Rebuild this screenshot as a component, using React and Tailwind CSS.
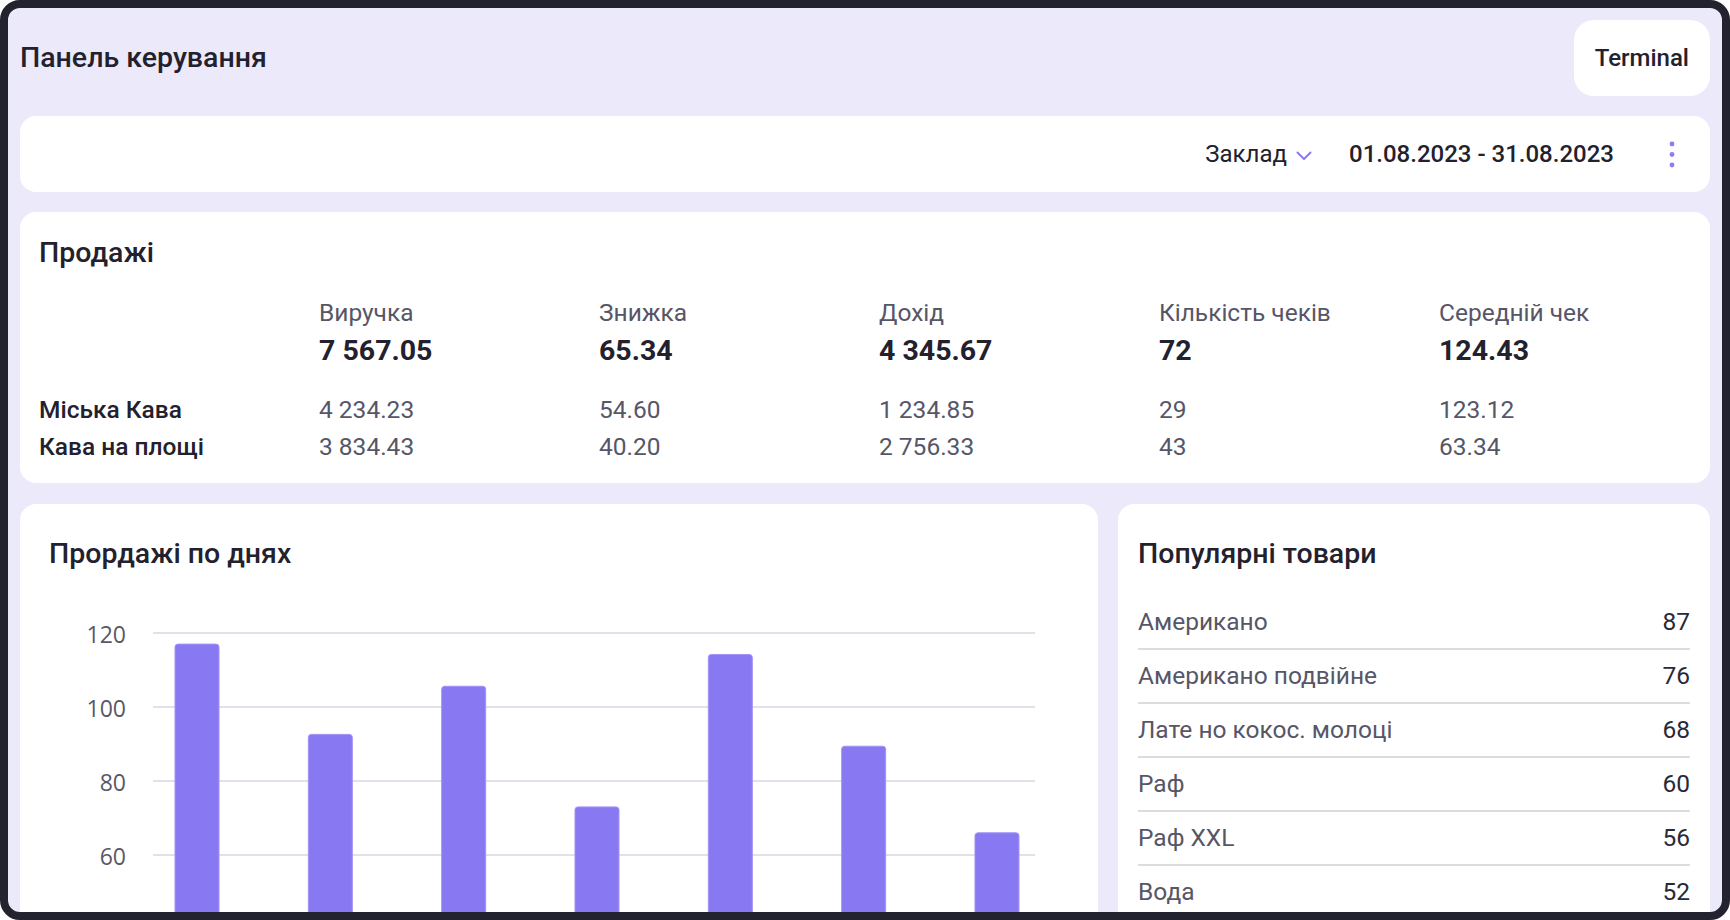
import React from 'react';

const stats = [
  { label: 'Виручка', total: '7 567.05', values: ['4 234.23', '3 834.43'] },
  { label: 'Знижка', total: '65.34', values: ['54.60', '40.20'] },
  { label: 'Дохід', total: '4 345.67', values: ['1 234.85', '2 756.33'] },
  { label: 'Кількість чеків', total: '72', values: ['29', '43'] },
  { label: 'Середній чек', total: '124.43', values: ['123.12', '63.34'] },
];

const places = ['Міська Кава', 'Кава на площі'];

const popular = [
  { name: 'Американо', count: 87 },
  { name: 'Американо подвійне', count: 76 },
  { name: 'Лате но кокос. молоці', count: 68 },
  { name: 'Раф', count: 60 },
  { name: 'Раф XXL', count: 56 },
  { name: 'Вода', count: 52 },
];

const days = [117, 92.6, 105.6, 73, 114.2, 89.4, 66];

// chart geometry, px inside the svg
const ZERO_Y = 506;
const PX_PER_UNIT = 3.7;
const ticks = [120, 100, 80, 60, 40, 20, 0];

const SalesChart = () => (
  <svg width="1078" height="520" className="block">
    {ticks.map((t) => {
      const y = ZERO_Y - t * PX_PER_UNIT;
      return (
        <g key={t}>
          <line x1="133" x2="1015" y1={y} y2={y} stroke="#d9d7e3" strokeWidth="1.5" />
          <text
            x="106"
            y={y + 10}
            textAnchor="end"
            fill="#595869"
            fontSize="23"
            fontFamily="'Open Sans', sans-serif"
          >
            {t}
          </text>
        </g>
      );
    })}
    {days.map((v, i) => {
      const x = 155 + i * 133.33;
      const top = ZERO_Y - v * PX_PER_UNIT;
      const w = 44;
      const r = 3;
      const d = `M${x} ${ZERO_Y} V${top + r} Q${x} ${top} ${x + r} ${top} H${x + w - r} Q${x + w} ${top} ${x + w} ${top + r} V${ZERO_Y} Z`;
      return <path key={i} d={d} fill="#8878f2" stroke="#a094f6" strokeWidth="1" />;
    })}
  </svg>
);

const App = () => {
  return (
    <div className="w-[1730px] h-[920px] rounded-[20px] border-8 border-[#23222f] bg-[#ece9fa] overflow-hidden font-['Roboto',sans-serif] text-[#22212d]">
      <div className="px-3 pt-3 flex flex-col gap-5">
        {/* header */}
        <div className="flex items-center justify-between h-[76px]">
          <h1 className="text-[28.5px] leading-[34px] font-medium">Панель керування</h1>
          <button className="h-[76px] px-[21px] rounded-[20px] bg-white text-[24px] font-medium">
            Terminal
          </button>
        </div>

        {/* filters */}
        <div className="h-[76px] rounded-2xl bg-white flex items-center justify-end pr-[35px]">
          <div className="flex items-center text-[24px] leading-[28px]">
            <span>Заклад</span>
            <svg width="16" height="10" viewBox="0 0 16 10" className="ml-[9px] mt-[3px]">
              <polyline points="1.5,1.5 8,8 14.5,1.5" fill="none" stroke="#8b7cf6" strokeWidth="2" strokeLinecap="round" strokeLinejoin="round" />
            </svg>
          </div>
          <span className="ml-[37px] text-[24px] leading-[28px] font-medium">01.08.2023 - 31.08.2023</span>
          <svg width="6" height="27" viewBox="0 0 6 27" className="ml-[55px]">
            <circle cx="3" cy="3" r="2.4" fill="#8b7cf6" />
            <circle cx="3" cy="13.5" r="2.4" fill="#8b7cf6" />
            <circle cx="3" cy="24" r="2.4" fill="#8b7cf6" />
          </svg>
        </div>

        {/* sales summary */}
        <div className="rounded-2xl bg-white pl-[19px] pt-6 pb-[18px]">
          <h2 className="text-[28.5px] leading-[34px] font-medium">Продажі</h2>
          <div className="mt-[29px] grid grid-cols-[repeat(6,280px)]">
            <div />
            {stats.map((s) => (
              <div key={s.label}>
                <div className="text-[24.5px] leading-[28px] text-[#575667]">{s.label}</div>
                <div className="mt-[7px] text-[28.5px] leading-[34px] font-bold">{s.total}</div>
              </div>
            ))}
          </div>
          <div className="mt-[23px] grid grid-cols-[repeat(6,280px)] text-[24.5px] leading-[37px]">
            {places.map((p, row) => (
              <React.Fragment key={p}>
                <div className="font-medium">{p}</div>
                {stats.map((s) => (
                  <div key={s.label} className="text-[#575667]">{s.values[row]}</div>
                ))}
              </React.Fragment>
            ))}
          </div>
        </div>

        {/* chart + popular */}
        <div className="grid grid-cols-[1078px_592px] gap-5 mt-px">
          <div className="h-[600px] rounded-2xl bg-white pt-[33px]">
            <h2 className="pl-[29px] text-[28.5px] leading-[34px] font-medium">Прордажі по днях</h2>
            <SalesChart />
          </div>
          <div className="h-[600px] rounded-2xl bg-white pt-[33px] px-5">
            <h2 className="text-[28.5px] leading-[34px] font-medium">Популярні товари</h2>
            <ul className="mt-[25px]">
              {popular.map((item) => (
                <li
                  key={item.name}
                  className="flex justify-between py-[13px] border-b-2 border-[#dcdce0] text-[24.5px] leading-[26px]"
                >
                  <span className="text-[#575667]">{item.name}</span>
                  <span className="text-[#2a2936]">{item.count}</span>
                </li>
              ))}
            </ul>
          </div>
        </div>
      </div>
    </div>
  );
};

export default App;
